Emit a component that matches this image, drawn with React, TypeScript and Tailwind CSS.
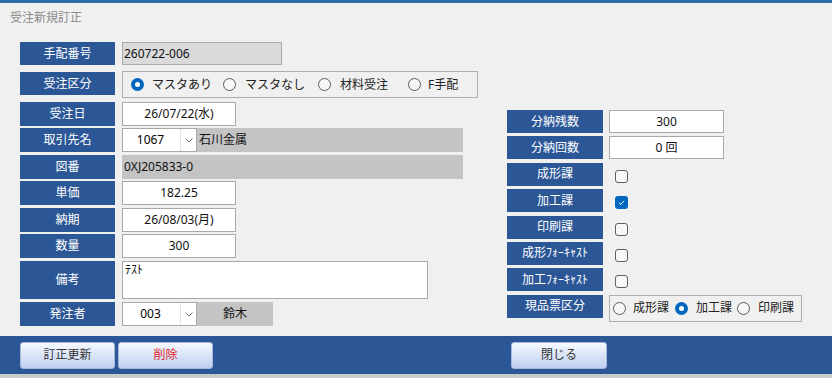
import type { ReactNode } from "react";

const font = { fontFamily: '"Noto Sans", "Noto Sans CJK JP", sans-serif' };

function Label({ children, className = "" }: { children: ReactNode; className?: string }) {
  return (
    <div
      className={`flex shrink-0 items-center justify-center bg-[#2b5797] text-[12px] text-white ${className}`}
    >
      {children}
    </div>
  );
}

function Field({
  children,
  className = "",
  gray,
}: {
  children?: ReactNode;
  className?: string;
  gray?: boolean;
}) {
  return (
    <div
      className={`flex items-center border border-[#a9a9a9] text-[12px] text-[#111] ${
        gray ? "bg-[#dadada]" : "bg-white"
      } ${className}`}
    >
      {children}
    </div>
  );
}

function Radio({ checked }: { checked?: boolean }) {
  return checked ? (
    <span className="flex h-[13px] w-[13px] shrink-0 items-center justify-center rounded-full bg-[#0067c0]">
      <span className="h-[5px] w-[5px] rounded-full bg-white" />
    </span>
  ) : (
    <span className="h-[13px] w-[13px] shrink-0 rounded-full border border-[#5a5a5a] bg-[#f7f7f7]" />
  );
}

function Check({ checked }: { checked?: boolean }) {
  return checked ? (
    <span className="mt-[7px] ml-[6px] flex h-[13px] w-[13px] items-center justify-center rounded-[3px] bg-[#0067c0]">
      <svg width="9" height="9" viewBox="0 0 9 9">
        <path d="M2 4.8 L3.8 6.4 L7 2.8" fill="none" stroke="#fff" strokeWidth="1" />
      </svg>
    </span>
  ) : (
    <span className="mt-[7px] ml-[6px] h-[13px] w-[13px] rounded-[3px] border border-[#5f5f5f] bg-[#f8f8f8]" />
  );
}

function Combo({ value }: { value: string }) {
  return (
    <div className="flex h-full w-[75px] shrink-0 border border-[#a9a9a9] bg-white text-[12px]">
      <div className="flex flex-1 items-center justify-center pr-[2px]">{value}</div>
      <div className="flex w-[16px] items-center justify-center border-l border-[#e3e3e3]">
        <svg width="8" height="5" viewBox="0 0 8 5">
          <path d="M0.5 0.5 L4 4 L7.5 0.5" fill="none" stroke="#777" strokeWidth="1" />
        </svg>
      </div>
    </div>
  );
}

function FooterButton({ children, red, className = "" }: { children: ReactNode; red?: boolean; className?: string }) {
  return (
    <button
      type="button"
      className={`h-[27px] rounded-[3px] border border-[#a4b8dc] bg-gradient-to-b from-[#f7f9fe] to-[#bdcff0] text-[12px] ${
        red ? "text-[#e0202a]" : "text-[#333]"
      } ${className}`}
    >
      {children}
    </button>
  );
}

export default function App() {
  return (
    <div className="flex h-[378px] w-[832px] flex-col bg-[#f0f0f0]" style={font}>
      <div className="h-[3px] bg-[#2e6aa6]" />
      <div className="h-[333px]">
        <div className="pl-[10px] pt-[7px] text-[12px] leading-[16px] text-[#8a8a8a]">受注新規訂正</div>

        <div className="mt-[16px] flex pl-[20px]">
          {/* left column */}
          <div className="flex w-[458px] flex-col">
            <div className="flex h-[23px] gap-[7px]">
              <Label className="w-[95px]">手配番号</Label>
              <Field gray className="w-[160px] pl-[1px]">
                260722-006
              </Field>
            </div>

            <div className="mt-[6px] flex h-[27px] items-start gap-[7px]">
              <Label className="mt-[1px] h-[23px] w-[95px]">受注区分</Label>
              <div className="flex h-[27px] w-[356px] items-center border border-[#adadad] text-[12px] text-[#222]">
                <div className="ml-[8px] flex items-center gap-[8px]">
                  <Radio checked />
                  <span>マスタあり</span>
                </div>
                <div className="ml-[11px] flex items-center gap-[9px]">
                  <Radio />
                  <span>マスタなし</span>
                </div>
                <div className="ml-[13px] flex items-center gap-[9px]">
                  <Radio />
                  <span>材料受注</span>
                </div>
                <div className="ml-[20px] flex items-center gap-[7px]">
                  <Radio />
                  <span>F手配</span>
                </div>
              </div>
            </div>

            <div className="mt-[4px] flex h-[24px] gap-[7px]">
              <Label className="w-[95px]">受注日</Label>
              <Field className="w-[114px] justify-center">26/07/22(水)</Field>
            </div>

            <div className="mt-[2px] flex h-[24px] gap-[7px]">
              <Label className="w-[95px]">取引先名</Label>
              <div className="flex h-full">
                <Combo value="1067" />
                <div className="flex w-[266px] items-center bg-[#c4c4c4] pl-[2px] text-[12px] text-[#111]">
                  石川金属
                </div>
              </div>
            </div>

            <div className="mt-[3px] flex h-[24px] gap-[7px]">
              <Label className="w-[95px]">図番</Label>
              <div className="flex w-[341px] items-center bg-[#c4c4c4] pl-[2px] text-[12px] text-[#111]">
                0XJ205833-0
              </div>
            </div>

            <div className="mt-[2px] flex h-[24px] gap-[7px]">
              <Label className="w-[95px]">単価</Label>
              <Field className="w-[114px] justify-center">182.25</Field>
            </div>

            <div className="mt-[3px] flex h-[24px] gap-[7px]">
              <Label className="w-[95px]">納期</Label>
              <Field className="w-[114px] justify-center">26/08/03(月)</Field>
            </div>

            <div className="mt-[2px] flex h-[24px] gap-[7px]">
              <Label className="w-[95px]">数量</Label>
              <Field className="w-[114px] justify-center">300</Field>
            </div>

            <div className="mt-[3px] flex h-[38px] gap-[7px]">
              <Label className="w-[95px]">備考</Label>
              <div className="w-[306px] border border-[#a9a9a9] bg-white pl-[2px] text-[12px] leading-[16px] text-[#111]">
                ﾃｽﾄ
              </div>
            </div>

            <div className="mt-[3px] flex h-[24px] gap-[7px]">
              <Label className="w-[95px]">発注者</Label>
              <div className="flex h-full">
                <Combo value="003" />
                <div className="flex w-[76px] items-center justify-center bg-[#c4c4c4] text-[12px] text-[#111]">
                  鈴木
                </div>
              </div>
            </div>
          </div>

          {/* right column */}
          <div className="ml-[29px] mt-[68px] flex flex-col gap-[3.4px]">
            <div className="flex h-[23px] gap-[6px]">
              <Label className="w-[96px]">分納残数</Label>
              <Field className="w-[115px] justify-center">300</Field>
            </div>
            <div className="flex h-[23px] gap-[6px]">
              <Label className="w-[96px]">分納回数</Label>
              <Field className="w-[115px] justify-center">0 回</Field>
            </div>
            <div className="flex h-[23px] gap-[6px]">
              <Label className="w-[96px]">成形課</Label>
              <Check />
            </div>
            <div className="flex h-[23px] gap-[6px]">
              <Label className="w-[96px]">加工課</Label>
              <Check checked />
            </div>
            <div className="flex h-[23px] gap-[6px]">
              <Label className="w-[96px]">印刷課</Label>
              <Check />
            </div>
            <div className="flex h-[23px] gap-[6px]">
              <Label className="w-[96px]">成形ﾌｫｰｷｬｽﾄ</Label>
              <Check />
            </div>
            <div className="flex h-[23px] gap-[6px]">
              <Label className="w-[96px]">加工ﾌｫｰｷｬｽﾄ</Label>
              <Check />
            </div>
            <div className="flex h-[23px] gap-[6px]">
              <Label className="w-[96px]">現品票区分</Label>
              <div className="flex h-[27px] w-[193px] items-center border border-[#adadad] text-[12px] text-[#222]">
                <div className="ml-[3px] flex items-center gap-[7px]">
                  <Radio />
                  <span>成形課</span>
                </div>
                <div className="ml-[6px] flex items-center gap-[8px]">
                  <Radio checked />
                  <span>加工課</span>
                </div>
                <div className="ml-[5px] flex items-center gap-[8px]">
                  <Radio />
                  <span>印刷課</span>
                </div>
              </div>
            </div>
          </div>
        </div>
      </div>

      <div className="flex h-[38px] items-center bg-[#2b5797] pl-[20px]">
        <FooterButton className="w-[95px]">訂正更新</FooterButton>
        <FooterButton red className="ml-[3px] w-[95px]">
          削除
        </FooterButton>
        <FooterButton className="ml-[298px] w-[96px]">閉じる</FooterButton>
      </div>
      <div className="h-[4px] bg-[#c6ccc6]" />
    </div>
  );
}
